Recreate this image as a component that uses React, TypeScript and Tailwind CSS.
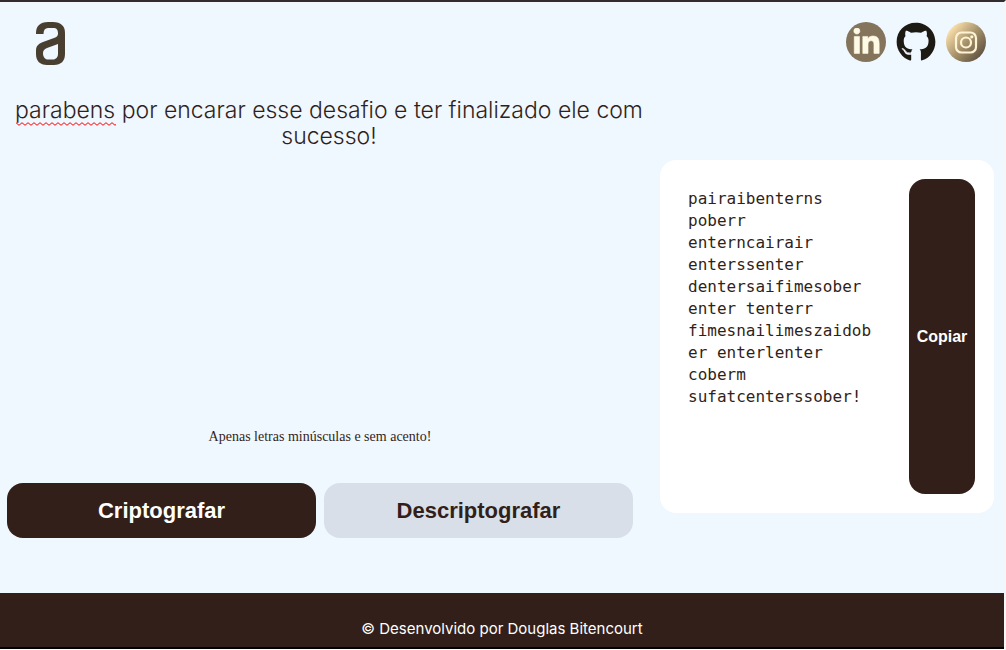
import { useState } from "react";
import { FaGithub, FaLinkedinIn } from "react-icons/fa";

const MESSAGE = "parabens por encarar esse desafio e ter finalizado ele com sucesso!";
const ENCRYPTED =
  "pairaibenterns poberr enterncairair enterssenter dentersaifimesober enter tenterr fimesnailimeszaidober enterlenter coberm sufatcenterssober!";

const KEYS: [string, string][] = [
  ["e", "enter"],
  ["i", "imes"],
  ["a", "ai"],
  ["o", "ober"],
  ["u", "ufat"],
];

const encrypt = (text: string) =>
  text.replace(/[eiaou]/g, (letter) => KEYS.find(([plain]) => plain === letter)![1]);

const decrypt = (text: string) =>
  KEYS.reduce((result, [plain, code]) => result.split(code).join(plain), text);

function Logo() {
  return (
    <svg viewBox="0 0 29 43" className="h-[43px] w-[29px]" role="img" aria-label="Alura">
      <path
        fill="#483f30"
        fillRule="evenodd"
        d="M0 12V11C0 4 4 0 12 0H17C25 0 29 4 29 11V32C29 39 25 43 18 43H11C4 43 0 39 0 32V29C0 24 2 22 7 20L18 16C21 15 22 13.5 22 11.5C22 8 21 6 17 6H12C9 6 7.5 8 7.5 12ZM22 22L11 26C8 27 7 29 7 31C7 35 9 37.5 12 37.5H17C20 37.5 22 35 22 32Z"
      />
    </svg>
  );
}

function InstagramIcon() {
  return (
    <svg viewBox="0 0 40 40" className="size-10" aria-hidden="true">
      <defs>
        <linearGradient id="gold" x1="0.1" y1="0.15" x2="0.9" y2="0.85">
          <stop offset="0" stopColor="#ffe3ad" />
          <stop offset="0.5" stopColor="#a8936c" />
          <stop offset="1" stopColor="#5f5240" />
        </linearGradient>
      </defs>
      <circle cx="20" cy="20" r="20" fill="url(#gold)" />
      <g fill="none" stroke="#fff3d3" strokeWidth="2.2">
        <rect x="10" y="10.5" width="20" height="20" rx="5.5" />
        <circle cx="20" cy="20.5" r="5" />
      </g>
      <circle cx="25.8" cy="14.8" r="1.6" fill="#fff3d3" />
    </svg>
  );
}

function Squiggle() {
  return (
    <svg className="pointer-events-none absolute top-[25px] left-4 h-1 w-[100px]" aria-hidden="true">
      <defs>
        <pattern id="wave" width="6" height="4" patternUnits="userSpaceOnUse">
          <path d="M-1 1L0 0.7L3 3.3L6 0.7L7 1" fill="none" stroke="#f00" strokeWidth="1" />
        </pattern>
      </defs>
      <rect width="100%" height="4" fill="url(#wave)" />
    </svg>
  );
}

export default function App() {
  const [message, setMessage] = useState(MESSAGE);
  const [result, setResult] = useState(ENCRYPTED);

  return (
    <div className="flex min-h-screen flex-col border-t-2 border-r-2 border-b border-t-[#322c2f] border-r-[#f4f6f8] border-b-white bg-[#eff7ff] text-[#321f1a]">
      <header className="flex items-start justify-between pt-5 pr-[18px] pl-9">
        <Logo />
        <nav className="flex gap-2.5">
          <a
            href="#linkedin"
            aria-label="LinkedIn"
            className="flex size-10 items-center justify-center rounded-full bg-[#83745b] text-[#fffae6]"
          >
            <FaLinkedinIn size={29} stroke="currentColor" strokeWidth={10} />
          </a>
          <a href="#github" aria-label="GitHub" className="block size-10 text-[#1d1a14]">
            <FaGithub size={40} />
          </a>
          <a href="#instagram" aria-label="Instagram" className="block size-10">
            <InstagramIcon />
          </a>
        </nav>
      </header>

      <main className="flex flex-1 items-start pt-8 pr-2.5">
        <section className="min-w-0 flex-1">
          <div className="relative">
            <textarea
              aria-label="Mensagem"
              spellCheck={false}
              value={message}
              onChange={(event) => setMessage(event.target.value)}
              className="block h-[330px] w-full resize-none bg-transparent pr-1 pl-0.5 text-center font-['Inter','Liberation_Sans',sans-serif] text-[23px] leading-[26px] font-light outline-none"
            />
            {message.startsWith("parabens ") && <Squiggle />}
          </div>
          <div className="pr-[27px] pl-[7px] text-center">
            <p className="font-['Liberation_Serif',serif] text-sm leading-5">
              Apenas letras minúsculas e sem acento!
            </p>
            <div className="mt-9 grid grid-cols-2 gap-2 font-['Liberation_Sans',sans-serif] text-[22px] font-bold">
              <button
                type="button"
                onClick={() => setResult(encrypt(message))}
                className="h-[55px] rounded-2xl bg-[#321f1a] text-white"
              >
                Criptografar
              </button>
              <button
                type="button"
                onClick={() => setResult(decrypt(message))}
                className="h-[55px] rounded-2xl bg-[#d8dfe8]"
              >
                Descriptografar
              </button>
            </div>
          </div>
        </section>

        <section className="mt-[63px] flex h-[353px] w-[334px] gap-8 rounded-2xl bg-white py-[19px] pr-[19px] pl-7">
          <textarea
            readOnly
            aria-label="Resultado"
            spellCheck={false}
            value={result}
            className="min-w-0 flex-1 resize-none overflow-hidden bg-transparent pt-[9px] font-['DejaVu_Sans_Mono','Liberation_Mono',monospace] text-base leading-[22px] outline-none"
          />
          <button
            type="button"
            onClick={() => navigator.clipboard?.writeText(result)}
            className="w-[66px] rounded-2xl bg-[#321f1a] font-['Liberation_Sans',sans-serif] text-base font-bold text-white"
          >
            Copiar
          </button>
        </section>
      </main>

      <footer className="border-b-2 border-black bg-[#321f1a] pt-[26px] pb-2 text-center font-['Inter','Liberation_Sans',sans-serif] text-[15px] leading-5 text-white">
        © Desenvolvido por Douglas Bitencourt
      </footer>
    </div>
  );
}
